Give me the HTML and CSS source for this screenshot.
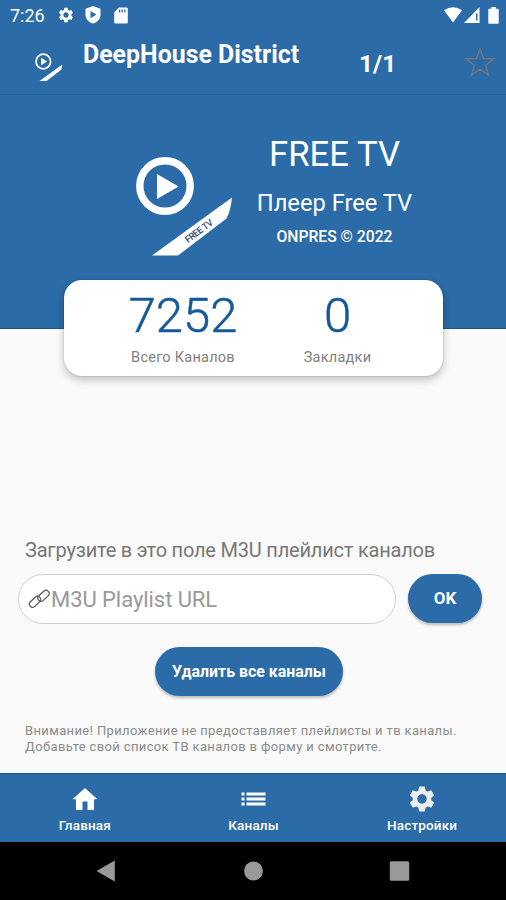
FILE: index.html
```html
<!DOCTYPE html>
<html lang="ru">
<head>
<meta charset="utf-8">
<title>Free TV</title>
<link rel="stylesheet" href="styles.css">
</head>
<body>
<svg class="defs" width="0" height="0">
  <symbol id="gear" viewBox="0 0 24 24"><path d="M19.14 12.94c.04-.3.06-.61.06-.94 0-.32-.02-.64-.07-.94l2.03-1.58c.18-.14.23-.41.12-.61l-1.92-3.32c-.12-.22-.37-.29-.59-.22l-2.39.96c-.5-.38-1.03-.7-1.62-.94l-.36-2.54c-.04-.24-.24-.41-.48-.41h-3.84c-.24 0-.43.17-.47.41l-.36 2.54c-.59.24-1.13.57-1.62.94l-2.39-.96c-.22-.08-.47 0-.59.22L2.74 8.87c-.12.21-.08.47.12.61l2.03 1.58c-.05.3-.09.63-.09.94s.02.64.07.94l-2.03 1.58c-.18.14-.23.41-.12.61l1.92 3.32c.12.22.37.29.59.22l2.39-.96c.5.38 1.03.7 1.62.94l.36 2.54c.05.24.24.41.48.41h3.84c.24 0 .44-.17.47-.41l.36-2.54c.59-.24 1.13-.56 1.62-.94l2.39.96c.22.08.47 0 .59-.22l1.92-3.32c.12-.22.07-.47-.12-.61l-2.01-1.58zM12 15.6c-1.98 0-3.6-1.62-3.6-3.6s1.62-3.6 3.6-3.6 3.6 1.62 3.6 3.6-1.62 3.6-3.6 3.6z"/></symbol>
</svg>
<div class="status">
  <span class="clock">7:26</span>
  <svg class="s-gear"><use href="#gear"/></svg>
  <svg class="s-shield" viewBox="0 0 16 18"><path fill-rule="evenodd" d="M8 0l7.500 2.700v6c0 4-3 7.500-7.500 8.900C3.500 16.200.5 12.700.5 8.700v-6zM5.500 5v7.200L11.500 8.600z"/></svg>
  <svg class="s-card" viewBox="0 0 14 17"><path fill-rule="evenodd" d="M5 .5h7.500q1.300 0 1.300 1.300v13.400q0 1.300-1.300 1.300h-11Q.2 16.500.2 15.200V5.300zM5 2.500v3h1.300v-3zM7.600 2.500v3h1.300v-3zM10.200 2.500v3h1.300v-3z"/></svg>
  <span class="grow"></span>
  <svg class="s-wifi" viewBox="0 0 18 16"><path d="M0 3.200Q9-2.600 18 3.200L9 15.500z"/></svg>
  <svg class="s-cell" viewBox="0 0 16 16"><path fill-rule="evenodd" d="M15.500 0v16H0zM12 6.500v7h1.500v-7z"/></svg>
  <svg class="s-batt" viewBox="0 0 11 17"><path d="M3.300 0h4.400v1.700h2q1 0 1 1v13q0 1-1 1H1.300q-1 0-1-1v-13q0-1 1-1h2z"/></svg>
</div>
<header class="bar">
  <svg class="logo-small" viewBox="0 0 28 29"><circle cx="8.300" cy="8.500" r="7.300" fill="none" stroke="#fff" stroke-width="1.700"/><path d="M6.200 4.800v7.400l5.800-3.700z"/><path d="M4.500 28L27.300 11.500l-1 5.300L11.500 28z"/></svg>
  <h1 class="title">DeepHouse District</h1>
  <span class="count">1/1</span>
  <svg class="star" viewBox="0 0 32 30"><path d="M16 1.800l3.500 9.700 10.300.3-8.100 6.400 2.800 9.900L16 22.400 7.500 28.100l2.800-9.900-8.100-6.400 10.300-.3z"/></svg>
</header>
<section class="hero">
  <svg class="logo" viewBox="0 0 98 100"><circle cx="29" cy="30" r="25.200" fill="none" stroke="#fff" stroke-width="7.400"/><path d="M21 18v25l21.500-12.500z"/><path d="M16 99.500L96 41.500q-1 12-5.500 21L42 99.500z"/><text class="logo-text" transform="translate(52 87) rotate(-37)" textLength="32">FREE TV</text></svg>
  <div class="names">
    <div class="n1">FREE TV</div>
    <div class="n2">Плеер Free TV</div>
    <div class="n3">ONPRES © 2022</div>
  </div>
</section>
<main>
  <section class="card">
    <div class="stat all"><b>7252</b><span>Всего Каналов</span></div>
    <div class="stat"><b>0</b><span>Закладки</span></div>
  </section>
  <p class="label">Загрузите в это поле M3U плейлист каналов</p>
  <div class="form">
    <div class="field"><svg class="link" viewBox="0 0 24 22"><g fill="none" stroke="#555" stroke-width="1.200"><rect x="-6.500" y="-3.200" width="13" height="6.400" rx="2.800" transform="translate(8 13.800) rotate(-43)"/><rect x="-6.500" y="-3.200" width="13" height="6.400" rx="2.800" transform="translate(16.500 7.800) rotate(-43)"/></g></svg><span>M3U Playlist URL</span></div>
    <button class="btn ok">OK</button>
  </div>
  <button class="btn del">Удалить все каналы</button>
  <p class="note">Внимание! Приложение не предоставляет плейлисты и тв каналы.<br>Добавьте свой список ТВ каналов в форму и смотрите.</p>
</main>
<nav class="tabs">
  <a class="tab"><svg viewBox="0 0 28 28"><path d="M14 3l12.500 11.300h-3.500V25h-6.500v-8.500h-5V25H5V14.300H1.500z"/></svg><span>Главная</span></a>
  <a class="tab"><svg viewBox="0 0 28 28"><path d="M2.500 7.500h3v3h-3zM7.500 7.500h19v3h-19zM2.500 12.500h3v3h-3zM7.500 12.500h19v3h-19zM2.500 17.500h3v3h-3zM7.500 17.500h19v3h-19z"/></svg><span>Каналы</span></a>
  <a class="tab"><svg class="t-gear" viewBox="0 0 28 28"><use href="#gear" x="-1.500" y="-1.500" width="31" height="31"/></svg><span>Настройки</span></a>
</nav>
<div class="system">
  <svg viewBox="0 0 22 22"><path d="M18.800.5v21L.5 11z"/></svg>
  <svg viewBox="0 0 22 22"><circle cx="11.500" cy="11" r="9.400"/></svg>
  <svg viewBox="0 0 22 22"><rect x="1.800" y="1.300" width="19.400" height="19.400" rx="1.500"/></svg>
</div>
</body>
</html>
```
FILE: styles.css
```css
* { box-sizing: border-box; margin: 0; padding: 0; }
body { width: 506px; height: 900px; overflow: hidden; display: flex; flex-direction: column; background: #fafafa; font-family: Roboto, sans-serif; }
svg { display: block; fill: #fff; flex: none; }
.defs { position: absolute; }
.status { height: 30px; flex: none; background: #2b6ba7; color: #fff; display: flex; align-items: center; padding: 0 7px 0 10px; }
.clock { width: 47px; font-size: 18px; line-height: 30px; padding-top: 2px; white-space: nowrap; }
.s-gear { width: 18px; height: 18px; }
.s-shield { width: 16px; height: 18px; margin-left: 10px; }
.s-card { width: 14px; height: 17px; margin-left: 13px; }
.grow { flex: 1; }
.s-wifi { width: 18px; height: 16px; }
.s-cell { width: 16px; height: 16px; margin-left: 2px; }
.s-batt { width: 11px; height: 17px; margin-left: 8px; }
.bar { height: 65px; flex: none; background: #2b6ba7; color: #fff; display: flex; align-items: flex-start; padding-left: 35px; border-bottom: 1px solid #255f97; }
.logo-small { width: 28px; height: 29px; margin-top: 23px; }
.title { width: 276px; margin: 10px 0 0 20px; font-size: 24.9px; line-height: 30px; font-weight: 700; white-space: nowrap; }
.count { width: 105px; margin-top: 19px; font-size: 24.5px; line-height: 30px; font-weight: 700; }
.star { width: 32px; height: 30px; margin-top: 17px; }
.star path { fill: none; stroke: #77777b; stroke-width: 1.4; }
.hero { height: 234px; flex: none; background: #2b6ba7; border-bottom: 1px solid #14588f; color: #fff; display: flex; padding-left: 136px; }
.logo { width: 98px; height: 100px; margin-top: 61px; }
.logo-text { font-size: 9px; fill: #263d6b; stroke: #263d6b; stroke-width: .2px; }
.names { width: 201px; margin-top: 38px; text-align: center; white-space: nowrap; }
.n1 { font-size: 34.7px; line-height: 42px; }
.n2 { font-size: 23.7px; line-height: 30px; margin-top: 13px; }
.n3 { font-size: 15.7px; font-weight: 500; line-height: 20px; margin-top: 9px; }
main { flex: 1; display: flex; flex-direction: column; }
.card { width: 379px; height: 96px; flex: none; margin: -49px 0 0 64px; background: #fff; border-radius: 18px; box-shadow: 0 4px 9px rgba(0,0,0,.24), 0 0 2px rgba(0,0,0,.2); display: flex; z-index: 1; padding-left: 35px; white-space: nowrap; }
.stat { width: 141px; text-align: center; }
.stat.all { width: 168px; }
.stat b { display: block; font-size: 49px; line-height: 58px; margin-top: 7px; font-weight: 300; color: #14599a; -webkit-text-stroke: .5px #14599a; }
.stat span { display: block; font-size: 14.5px; letter-spacing: .25px; line-height: 20px; margin-top: 3px; color: #808080; }
.label { margin: 161px 0 0 25px; font-size: 20px; letter-spacing: -.2px; line-height: 26px; color: #777; white-space: nowrap; }
.form { display: flex; margin: 11px 0 0 18px; gap: 12px; }
.field { width: 378px; height: 50px; border: 1px solid #cfcfcf; border-radius: 25px; background: #fff; display: flex; align-items: center; padding-left: 8px; font-size: 22px; color: #999; }
.link { width: 24px; height: 22px; }
.field span { line-height: 50px; padding-top: 2px; letter-spacing: -.06px; white-space: nowrap; }
.btn { border: 0; border-radius: 25px; background: #2b6ba7; color: #fff; height: 49px; font: 700 15.900px/49px Roboto, sans-serif; box-shadow: 0 2px 3px rgba(0,0,0,.25); white-space: nowrap; }
.ok { width: 74px; font-size: 17px; }
.del { width: 188px; flex: none; margin: 23px 0 0 155px; }
.note { margin: 27px 0 0 25px; font-size: 13px; letter-spacing: .36px; line-height: 16px; color: #8b8b8b; white-space: nowrap; }
.tabs { height: 69px; flex: none; display: grid; grid-template-columns: repeat(3, 1fr); background: #2b6ba7; border-top: 1px solid #155a90; }
.tab { display: flex; flex-direction: column; align-items: center; color: #fff; font-size: 13.5px; letter-spacing: .15px; line-height: 18px; font-weight: 500; padding: 11px 0 0 1px; }
.tab svg { width: 28px; height: 28px; }
.tab span { margin-top: 3px; }
.tab .t-gear { fill: #eee; }
.system { height: 58px; flex: none; background: #000; display: flex; justify-content: center; padding-top: 18px; gap: 124px; }
.system svg { width: 22px; height: 22px; fill: #999; }
```
